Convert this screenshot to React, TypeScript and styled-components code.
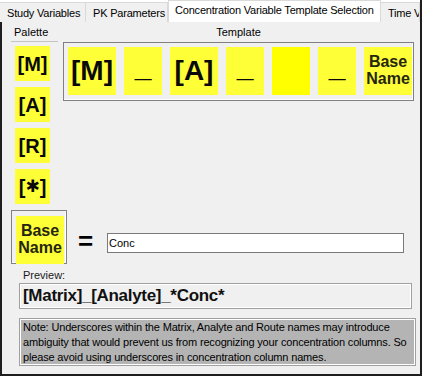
import React from "react";
import styled, { createGlobalStyle } from "styled-components";

const GlobalStyle = createGlobalStyle`
  body {
    margin: 0;
    background: #ffffff;
    font-family: "Liberation Sans", Arial, sans-serif;
  }
`;

const Frame = styled.div`
  width: 422px;
  height: 376px;
  box-sizing: border-box;
  border-right: 2px solid #1e1e1e;
  display: flex;
  flex-direction: column;
`;

const TabStrip = styled.div`
  height: 22px;
  display: flex;
  align-items: flex-end;
  background: #ffffff;
`;

const Tab = styled.div<{ $active?: boolean; $width: number }>`
  box-sizing: border-box;
  width: ${(p) => p.$width}px;
  height: ${(p) => (p.$active ? 22 : 20)}px;
  padding: ${(p) => (p.$active ? "3px 0 0 6px" : "4px 0 0 7px")};
  background: ${(p) => (p.$active ? "#ffffff" : "#f0f0f0")};
  border: 1px solid #d9d9d9;
  border-bottom: none;
  border-left-width: ${(p) => (p.$active ? 1 : 0)}px;
  font-size: 11px;
  letter-spacing: -0.2px;
  color: #000;
  white-space: nowrap;
  overflow: hidden;
  flex: none;
`;

const Panel = styled.div`
  flex: 1;
  box-sizing: border-box;
  background: #f0f0f0;
  border-left: 2px solid #1e1e1e;
  border-bottom: 2px solid #1e1e1e;
  padding: 4px 0 0 9px;
  display: flex;
  flex-direction: column;
`;

const TopGrid = styled.div`
  display: grid;
  grid-template-columns: 47px 351px;
  column-gap: 5px;
  align-items: start;
`;

const PaletteHeader = styled.div`
  height: 15px;
  line-height: 13px;
  padding-left: 3px;
  font-size: 11px;
  color: #000;
  border-bottom: 1px solid #c4c4c4;
`;

const PaletteList = styled.div`
  margin: 4px 0 0 4px;
  display: flex;
  flex-direction: column;
  gap: 6px;
`;

const TemplateHeader = styled.div`
  height: 16px;
  line-height: 13px;
  text-align: center;
  font-size: 11px;
  color: #000;
`;

const TemplateBox = styled.div`
  box-sizing: border-box;
  height: 59px;
  border: 1px solid #808080;
  box-shadow: inset -1px -1px 0 #ffffff;
  padding: 4px 0 0 4px;
  display: flex;
  gap: 8px;
`;

const Tile = styled.div<{
  $w: number;
  $h: number;
  $size: number;
  $bright?: boolean;
  $lift?: number;
}>`
  width: ${(p) => p.$w}px;
  height: ${(p) => p.$h}px;
  flex: none;
  box-sizing: border-box;
  padding-bottom: ${(p) => p.$lift ?? 0}px;
  background: ${(p) => (p.$bright ? "#ffff00" : "#ffff38")};
  display: flex;
  align-items: center;
  justify-content: center;
  font-size: ${(p) => p.$size}px;
  font-weight: bold;
  color: #0a0a0a;
  line-height: 1;
  white-space: nowrap;
`;

const NameTile = styled.div`
  width: 48px;
  height: 48px;
  flex: none;
  box-sizing: border-box;
  padding-bottom: 3px;
  background: #ffff38;
  display: flex;
  flex-direction: column;
  align-items: center;
  justify-content: center;
  font-size: 16px;
  font-weight: bold;
  line-height: 17px;
  color: #262610;
`;

const Star = styled.span`
  font-family: "DejaVu Sans", sans-serif;
  font-size: 17px;
`;

const BottomRow = styled.div`
  margin-top: 6px;
  display: flex;
  align-items: flex-start;
`;

const BaseBox = styled.div`
  box-sizing: border-box;
  width: 56px;
  height: 54px;
  border: 1px solid #808080;
  box-shadow: inset -1px -1px 0 #ffffff;
  padding: 5px 0 0 4px;
`;

const EqualsSign = styled.div`
  margin: 18px 0 0 11px;
  width: 15px;
  font-size: 26px;
  font-weight: bold;
  line-height: 26px;
  color: #000;
`;

const NameInput = styled.input`
  margin: 23px 0 0 14px;
  box-sizing: border-box;
  width: 297px;
  height: 20px;
  border: 1px solid #7a7a7a;
  background: #ffffff;
  padding: 0 0 0 1px;
  font-family: "Liberation Sans", Arial, sans-serif;
  font-size: 11px;
  color: #000;
  outline: none;
`;

const PreviewLabel = styled.div`
  margin: 4px 0 0 12px;
  font-size: 11px;
  line-height: 14px;
  color: #1a1a1a;
`;

const PreviewBox = styled.div`
  box-sizing: border-box;
  margin: 1px 0 0 8px;
  width: 393px;
  height: 26px;
  border: 1px solid #a0a0a0;
  box-shadow: inset 0 0 0 1px #ffffff;
  padding-left: 3px;
  font-size: 17px;
  letter-spacing: -0.3px;
  font-weight: bold;
  line-height: 24px;
  color: #111;
`;

const NoteBox = styled.div`
  box-sizing: border-box;
  margin: 9px 0 0 8px;
  width: 397px;
  height: 48px;
  border: 1px solid #a0a0a0;
  box-shadow: inset 0 0 0 1px #ffffff;
  background: #b4b4b4;
  padding: 1px 0 0 3px;
  font-size: 11px;
  letter-spacing: -0.16px;
  line-height: 15px;
  color: #000;
  white-space: nowrap;
  overflow: hidden;
`;

const tabs = [
  { label: "Study Variables", width: 86 },
  { label: "PK Parameters", width: 82 },
  { label: "Concentration Variable Template Selection", width: 213, active: true },
  { label: "Time V", width: 39 },
];

const palette = ["[M]", "[A]", "[R]"];

export default function App() {
  return (
    <>
      <GlobalStyle />
      <Frame>
        <TabStrip>
          {tabs.map((t) => (
            <Tab key={t.label} $width={t.width} $active={t.active}>
              {t.label}
            </Tab>
          ))}
        </TabStrip>
        <Panel>
          <TopGrid>
            <div>
              <PaletteHeader>Palette</PaletteHeader>
              <PaletteList>
                {palette.map((p) => (
                  <Tile key={p} $w={35} $h={35} $size={20}>
                    {p}
                  </Tile>
                ))}
                <Tile $w={35} $h={35} $size={20}>
                  [<Star>✱</Star>]
                </Tile>
              </PaletteList>
            </div>
            <div>
              <TemplateHeader>Template</TemplateHeader>
              <TemplateBox>
                <Tile $w={48} $h={48} $size={28}>[M]</Tile>
                <Tile $w={38} $h={48} $size={30} $lift={9}>_</Tile>
                <Tile $w={48} $h={48} $size={28}>[A]</Tile>
                <Tile $w={38} $h={48} $size={30} $lift={9}>_</Tile>
                <Tile $w={38} $h={48} $size={28} $bright />
                <Tile $w={38} $h={48} $size={30} $lift={9}>_</Tile>
                <NameTile>
                  <span>Base</span>
                  <span>Name</span>
                </NameTile>
              </TemplateBox>
            </div>
          </TopGrid>
          <BottomRow>
            <BaseBox>
              <NameTile>
                <span>Base</span>
                <span>Name</span>
              </NameTile>
            </BaseBox>
            <EqualsSign>=</EqualsSign>
            <NameInput defaultValue="Conc" />
          </BottomRow>
          <PreviewLabel>Preview:</PreviewLabel>
          <PreviewBox>[Matrix]_[Analyte]_*Conc*</PreviewBox>
          <NoteBox>
            Note: Underscores within the Matrix, Analyte and Route names may introduce
            <br />
            ambiguity that would prevent us from recognizing your concentration columns. So
            <br />
            please avoid using underscores in concentration column names.
          </NoteBox>
        </Panel>
      </Frame>
    </>
  );
}
